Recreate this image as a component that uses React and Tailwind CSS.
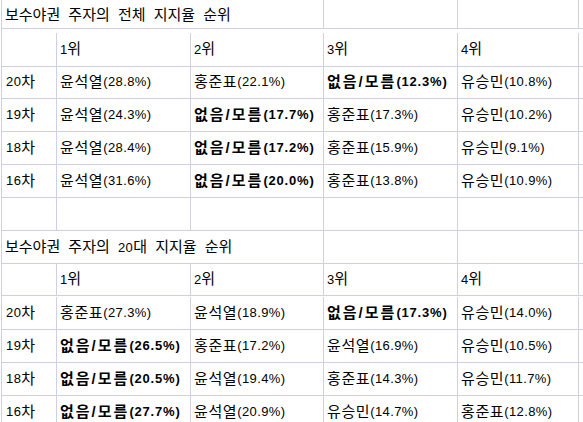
const overall = [
  ["20차", ["윤석열", "28.8%"], ["홍준표", "22.1%"], ["없음/모름", "12.3%", true], ["유승민", "10.8%"]],
  ["19차", ["윤석열", "24.3%"], ["없음/모름", "17.7%", true], ["홍준표", "17.3%"], ["유승민", "10.2%"]],
  ["18차", ["윤석열", "28.4%"], ["없음/모름", "17.2%", true], ["홍준표", "15.9%"], ["유승민", "9.1%"]],
  ["16차", ["윤석열", "31.6%"], ["없음/모름", "20.0%", true], ["홍준표", "13.8%"], ["유승민", "10.9%"]],
];

const twenties = [
  ["20차", ["홍준표", "27.3%"], ["윤석열", "18.9%"], ["없음/모름", "17.3%", true], ["유승민", "14.0%"]],
  ["19차", ["없음/모름", "26.5%", true], ["홍준표", "17.2%"], ["윤석열", "16.9%"], ["유승민", "10.5%"]],
  ["18차", ["없음/모름", "20.5%", true], ["윤석열", "19.4%"], ["홍준표", "14.3%"], ["유승민", "11.7%"]],
  ["16차", ["없음/모름", "27.7%", true], ["윤석열", "20.9%"], ["유승민", "14.7%"], ["홍준표", "12.8%"]],
];

const cell = "flex items-center border-r border-b border-[#cfd0e6] pl-[3px] whitespace-nowrap overflow-hidden";
const last = "border-b border-[#cfd0e6]";

function Ko({ children, bold }) {
  return (
    <span className={bold ? "text-[15px] font-bold tracking-[2px]" : "text-[15px] tracking-[0.6px]"}>
      {children}
    </span>
  );
}

function Entry({ data }) {
  const [name, pct, bold] = data;
  return (
    <div className={cell}>
      <Ko bold={bold}>{name}</Ko>
      <span className={bold ? "text-[13px] font-bold tracking-[0.8px]" : "text-[13px] tracking-[0.4px]"}>({pct})</span>
    </div>
  );
}

function TitleRow({ children, h, extra }) {
  return (
    <>
      <div className={`col-span-3 flex items-center border-b border-r border-[#cfd0e6] pl-[3px] whitespace-nowrap ${h} ${extra}`}>
        {children}
      </div>
      <div className={`${cell} ${h}`} />
      <div className={`${cell} ${h}`} />
      <div className={`${last} ${h}`} />
    </>
  );
}

function Block({ title, rows, firstRow }) {
  return (
    <>
      {title}
      <div className={`${cell} ${firstRow}`} />
      {["1", "2", "3", "4"].map((n) => (
        <div key={n} className={`${cell} ${firstRow}`}>
          <span className="text-[13px]">{n}</span>
          <Ko>위</Ko>
        </div>
      ))}
      <div className={`${last} ${firstRow}`} />
      {rows.map((r) => (
        <div key={r[0]} className="contents">
          <div className={`${cell} h-[33px] !pl-[4px]`}>
            <span className="text-[13px] tracking-[0.4px]">{r[0].slice(0, 2)}</span>
            <Ko>{r[0].slice(2)}</Ko>
          </div>
          {r.slice(1).map((d, i) => (
            <Entry key={i} data={d} />
          ))}
          <div className={`${last} h-[33px]`} />
        </div>
      ))}
    </>
  );
}

export default function App() {
  return (
    <div className="w-[583px] h-[422px] overflow-hidden bg-white pl-px text-black font-['Liberation_Sans','Noto_Sans_CJK_KR',sans-serif]">
      <div className="grid grid-cols-[55px_134px_133px_134px_121px_1fr] auto-rows-[33px] border-l border-[#cfd0e6]">
        <Block
          firstRow="h-[34px]"
          rows={overall}
          title={
            <TitleRow h="h-[29px]" extra="pt-[3px]">
              <span className="text-[15px] tracking-[0px] [word-spacing:4px]">보수야권 주자의 전체 지지율 순위</span>
            </TitleRow>
          }
        />
        {[0, 1, 2, 3, 4].map((i) => (
          <div key={i} className={cell} />
        ))}
        <div className={last} />
        <Block
          firstRow="h-[32px]"
          rows={twenties}
          title={
            <TitleRow h="h-[33px]" extra="">
              <span className="text-[15px] tracking-[0px] [word-spacing:4px]">
                보수야권 주자의 <span className="text-[13px] tracking-[0.4px]">20</span>대 지지율 순위
              </span>
            </TitleRow>
          }
        />
      </div>
    </div>
  );
}
